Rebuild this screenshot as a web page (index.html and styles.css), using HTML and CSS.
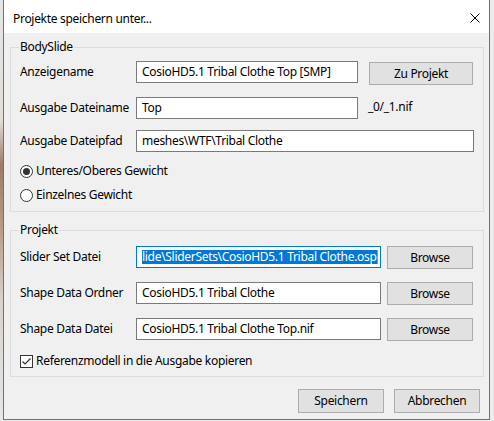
FILE: index.html
```html
<!DOCTYPE html>
<html lang="de">
<head>
<meta charset="utf-8">
<title>Projekte speichern unter...</title>
<link rel="stylesheet" href="styles.css">
</head>
<body>
<div class="window">
  <div class="titlebar">
    <span class="title">Projekte speichern unter...</span>
    <svg class="close" width="10" height="10" viewBox="0 0 10 10"><path d="M0.5 0.5 L9.5 9.5 M9.5 0.5 L0.5 9.5" stroke="#000" stroke-width="1" fill="none"/></svg>
  </div>
  <div class="content">
    <fieldset class="group group-body">
      <legend>BodySlide</legend>
      <div class="row row-a">
        <label class="lbl">Anzeigename</label>
        <div class="field w-name">CosioHD5.1 Tribal Clothe Top [SMP]</div>
        <div class="btn btn-zu">Zu Projekt</div>
      </div>
      <div class="row row-b">
        <label class="lbl">Ausgabe Dateiname</label>
        <div class="field w-name">Top</div>
        <span class="suffix">_0/_1.nif</span>
      </div>
      <div class="row row-c">
        <label class="lbl">Ausgabe Dateipfad</label>
        <div class="field w-path">meshes\WTF\Tribal Clothe</div>
      </div>
      <div class="opt opt-1">
        <span class="radio checked"></span>
        <span class="opt-text">Unteres/Oberes Gewicht</span>
      </div>
      <div class="opt opt-2">
        <span class="radio"></span>
        <span class="opt-text">Einzelnes Gewicht</span>
      </div>
    </fieldset>
    <fieldset class="group group-proj">
      <legend>Projekt</legend>
      <div class="row row-p1">
        <label class="lbl">Slider Set Datei</label>
        <div class="field w-proj focused"><span class="sel">lide\SliderSets\CosioHD5.1 Tribal Clothe.osp</span></div>
        <div class="btn btn-browse">Browse</div>
      </div>
      <div class="row row-p2">
        <label class="lbl">Shape Data Ordner</label>
        <div class="field w-proj">CosioHD5.1 Tribal Clothe</div>
        <div class="btn btn-browse">Browse</div>
      </div>
      <div class="row row-p3">
        <label class="lbl">Shape Data Datei</label>
        <div class="field w-proj">CosioHD5.1 Tribal Clothe Top.nif</div>
        <div class="btn btn-browse">Browse</div>
      </div>
      <div class="opt opt-3">
        <span class="check"><svg width="11" height="11" viewBox="0 0 11 11"><path d="M1.5 5.5 L4 8 L9.5 2.5" stroke="#333" stroke-width="1.2" fill="none"/></svg></span>
        <span class="opt-text">Referenzmodell in die Ausgabe kopieren</span>
      </div>
    </fieldset>
    <div class="actions">
      <div class="btn btn-action">Speichern</div>
      <div class="btn btn-action">Abbrechen</div>
    </div>
  </div>
</div>
</body>
</html>
```
FILE: styles.css
```css
html, body {
  margin: 0;
  padding: 0;
}
body {
  width: 494px;
  height: 421px;
  overflow: hidden;
  background-color: #ececec;
  background-image: linear-gradient(to bottom, #e6e6e6 0, #e2ddd8 120px, #9c7c68 165px, #b89c88 230px, #d8d2cc 300px, #e6e6e6 421px);
  background-size: 3px 100%;
  background-repeat: no-repeat;
  font-family: "Noto Sans", "DejaVu Sans", sans-serif;
  font-size: 12px;
  letter-spacing: -0.3px;
  color: #000;
}
.window {
  margin-left: 3px;
  width: 485px;
  height: 419px;
  border: 1px solid #1a86e8;
  border-top: none;
  background: #f0f0f0;
  display: flex;
  flex-direction: column;
}
.titlebar {
  height: 33px;
  background: #fff;
  display: flex;
  align-items: flex-start;
  justify-content: space-between;
  padding: 0 9px 0 9px;
  box-sizing: border-box;
}
.title {
  margin-top: 11px;
  line-height: 16px;
}
.close {
  margin-top: 13px;
  display: block;
}
.content {
  padding: 0 5px 0 6px;
  display: flex;
  flex-direction: column;
}
.group {
  margin: 0;
  border: 1px solid #dcdcdc;
  padding: 0 0 0 9px;
  min-width: 0;
}
.group legend {
  padding: 0 1px;
  line-height: 14px;
  margin-left: -1px;
}
.group-body {
  margin-top: 7px;
  padding-top: 7px;
  padding-bottom: 8px;
}
.group-proj {
  margin-top: 11px;
  padding-top: 9px;
  padding-bottom: 7px;
}
.row {
  display: flex;
  align-items: flex-start;
}
.lbl {
  width: 116px;
  flex: none;
  line-height: 22px;
  height: 22px;
}
.field {
  box-sizing: border-box;
  height: 22px;
  line-height: 20px;
  border: 1px solid #7a7a7a;
  background: #fff;
  padding-left: 5px;
  white-space: nowrap;
  overflow: hidden;
  flex: none;
}
.w-name { width: 222px; }
.w-path { width: 338px; }
.w-proj { width: 245px; }
.focused {
  border-color: #0078d7;
}
.sel {
  display: inline-block;
  line-height: 14px;
  background: #0078d7;
  color: #fff;
  border-right: 1px solid #e8841c;
  vertical-align: middle;
  margin-top: -2px;
}
.btn {
  box-sizing: border-box;
  border: 1px solid #adadad;
  background: #e1e1e1;
  text-align: center;
  flex: none;
}
.btn-zu {
  width: 104px;
  height: 23px;
  line-height: 21px;
  margin-left: 11px;
  margin-top: 1px;
}
.btn-browse {
  width: 86px;
  height: 23px;
  line-height: 21px;
  margin-left: 6px;
}
.suffix {
  margin-left: 10px;
  line-height: 20px;
}
.row-a { height: 24px; }
.row-b { margin-top: 12px; height: 22px; }
.row-c { margin-top: 11px; height: 22px; }
.row-p1, .row-p2, .row-p3 { height: 24px; }
.row-p2, .row-p3 { margin-top: 12px; }
.opt {
  display: flex;
  align-items: center;
  height: 16px;
}
.opt-1 { margin-top: 11px; }
.opt-2 { margin-top: 8px; }
.opt-3 { margin-top: 11px; }
.opt-text {
  margin-left: 3px;
  line-height: 16px;
}
.radio {
  box-sizing: border-box;
  width: 13px;
  height: 13px;
  border: 1px solid #333;
  border-radius: 50%;
  background: #fff;
  display: flex;
  align-items: center;
  justify-content: center;
}
.radio.checked::after {
  content: "";
  width: 7px;
  height: 7px;
  border-radius: 50%;
  background: #333;
}
.check {
  box-sizing: border-box;
  width: 13px;
  height: 13px;
  border: 1px solid #333;
  background: #fff;
  display: block;
}
.check svg {
  display: block;
}
.actions {
  display: flex;
  justify-content: flex-end;
  gap: 10px;
  margin-top: 12px;
  padding-right: 4px;
}
.btn-action {
  width: 86px;
  height: 24px;
  line-height: 22px;
}
```
